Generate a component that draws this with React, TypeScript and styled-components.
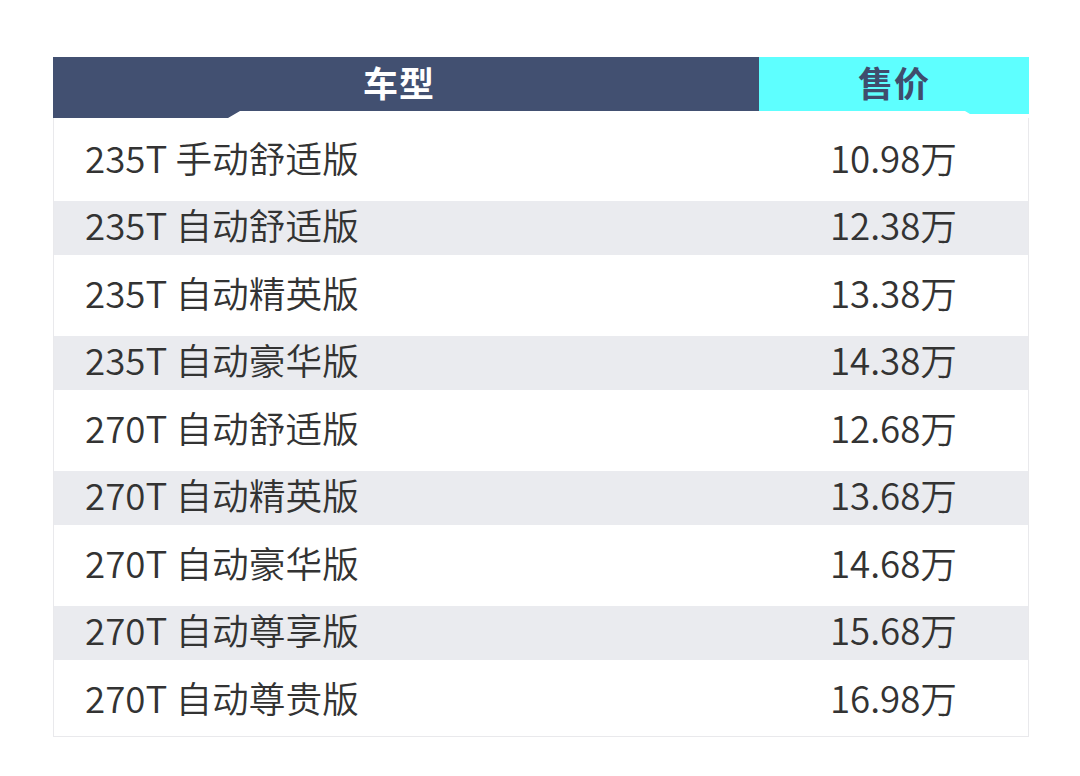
import React from "react";
import styled, { createGlobalStyle } from "styled-components";

const GlobalStyle = createGlobalStyle`
  html, body {
    margin: 0;
    padding: 0;
    background: #ffffff;
  }
  body {
    font-family: "Noto Sans CJK SC", "Noto Sans", sans-serif;
  }
`;

const Page = styled.div`
  width: 1080px;
  height: 776px;
  padding: 57px 0 0 53px;
  box-sizing: border-box;
`;

const Table = styled.div`
  width: 976px;
  display: flex;
  flex-direction: column;
`;

const Header = styled.div`
  display: grid;
  grid-template-columns: 706px 270px;
  height: 61px;
`;

const HeadCellLeft = styled.div`
  background: #425071;
  color: #ffffff;
  height: 61px;
  clip-path: polygon(0 0, 100% 0, 100% 54px, 187px 54px, 175px 61px, 0 61px);
  display: flex;
  align-items: flex-start;
  justify-content: center;
  padding-right: 14px;
  box-sizing: border-box;
`;

const HeadCellRight = styled.div`
  background: #5effff;
  color: #3f4d6d;
  height: 57px;
  clip-path: polygon(0 0, 100% 0, 100% 57px, 211px 57px, 206px 54px, 0 54px);
  display: flex;
  align-items: flex-start;
  justify-content: center;
`;

const HeadText = styled.span`
  font-size: 35px;
  font-weight: 700;
  line-height: 50px;
  letter-spacing: 1px;
`;

const Body = styled.div`
  border: 1px solid #e9e9ec;
  border-top: none;
  padding: 9px 0 1px;
  display: flex;
  flex-direction: column;
`;

const Row = styled.div<{ $striped: boolean }>`
  display: grid;
  grid-template-columns: 705px 1fr;
  align-items: center;
  height: 67.5px;
  padding: 6.75px 0;
  box-sizing: border-box;
  background: ${(p) => (p.$striped ? "#eaebef" : "transparent")};
  background-clip: content-box;
  color: #333333;
  font-size: 36.7px;
  font-weight: 350;
  line-height: 46px;
`;

const ModelCell = styled.div`
  padding: 0 0 8px 31px;
  white-space: nowrap;
`;

const PriceCell = styled.div`
  padding-bottom: 8px;
  text-align: center;
  white-space: nowrap;
`;

const rows = [
  ["235T 手动舒适版", "10.98万"],
  ["235T 自动舒适版", "12.38万"],
  ["235T 自动精英版", "13.38万"],
  ["235T 自动豪华版", "14.38万"],
  ["270T 自动舒适版", "12.68万"],
  ["270T 自动精英版", "13.68万"],
  ["270T 自动豪华版", "14.68万"],
  ["270T 自动尊享版", "15.68万"],
  ["270T 自动尊贵版", "16.98万"],
];

export default function App() {
  return (
    <>
      <GlobalStyle />
      <Page>
        <Table>
          <Header>
            <HeadCellLeft>
              <HeadText>车型</HeadText>
            </HeadCellLeft>
            <HeadCellRight>
              <HeadText>售价</HeadText>
            </HeadCellRight>
          </Header>
          <Body>
            {rows.map(([model, price], i) => (
              <Row key={model} $striped={i % 2 === 1}>
                <ModelCell>{model}</ModelCell>
                <PriceCell>{price}</PriceCell>
              </Row>
            ))}
          </Body>
        </Table>
      </Page>
    </>
  );
}
